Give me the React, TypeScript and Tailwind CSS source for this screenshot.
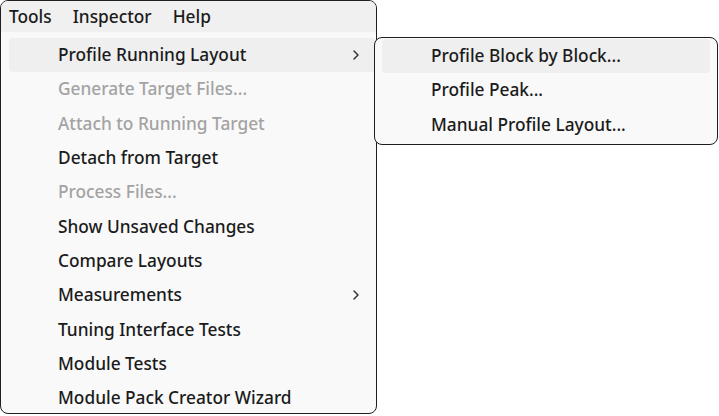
import { ChevronRight } from 'lucide-react';

type Item = { label: string; disabled?: boolean; submenu?: boolean; active?: boolean };

const items: Item[] = [
  { label: 'Profile Running Layout', submenu: true, active: true },
  { label: 'Generate Target Files...', disabled: true },
  { label: 'Attach to Running Target', disabled: true },
  { label: 'Detach from Target' },
  { label: 'Process Files...', disabled: true },
  { label: 'Show Unsaved Changes' },
  { label: 'Compare Layouts' },
  { label: 'Measurements', submenu: true },
  { label: 'Tuning Interface Tests' },
  { label: 'Module Tests' },
  { label: 'Module Pack Creator Wizard' },
];

const subItems = ['Profile Block by Block...', 'Profile Peak...', 'Manual Profile Layout...'];

export default function App() {
  return (
    <div
      className="relative w-[719px] h-[416px] bg-white text-[17.3px] font-medium text-[#1b1b1b]"
      style={{ fontFamily: '"Noto Sans", "Open Sans", sans-serif' }}
    >
      {/* Main menu window */}
      <div className="w-[377px] h-[414px] border border-[#1f1f1f] rounded-[8px] bg-[#f9f9f9] overflow-hidden flex flex-col">
        {/* Menu bar */}
        <div className="h-[32px] bg-[#f0f0f0] border-b border-[#f7f7f7] flex items-center pl-[8px] gap-[21px] shrink-0">
          <span>Tools</span>
          <span>Inspector</span>
          <span>Help</span>
        </div>

        {/* Items */}
        <div className="pt-[5px] flex flex-col">
          {items.map((it) => (
            <div
              key={it.label}
              className={`h-[34.3px] ml-[8px] rounded-[4px] flex items-center pl-[49px] pr-[12px] ${
                it.active ? 'bg-[#efefef]' : ''
              } ${it.disabled ? 'text-[#a3a3a3]' : ''}`}
            >
              <span className="flex-1">{it.label}</span>
              {it.submenu && <ChevronRight size={16} strokeWidth={2.2} className="text-[#333333]" />}
            </div>
          ))}
        </div>
      </div>

      {/* Submenu */}
      <div className="absolute left-[374px] top-[37px] w-[344px] h-[108px] border border-[#1f1f1f] rounded-[8px] bg-[#f9f9f9] pt-[1px] px-[7px]">
        {subItems.map((s, i) => (
          <div
            key={s}
            className={`h-[34.3px] rounded-[4px] flex items-center pl-[49px] ${i === 0 ? 'bg-[#efefef]' : ''}`}
          >
            {s}
          </div>
        ))}
      </div>
    </div>
  );
}
